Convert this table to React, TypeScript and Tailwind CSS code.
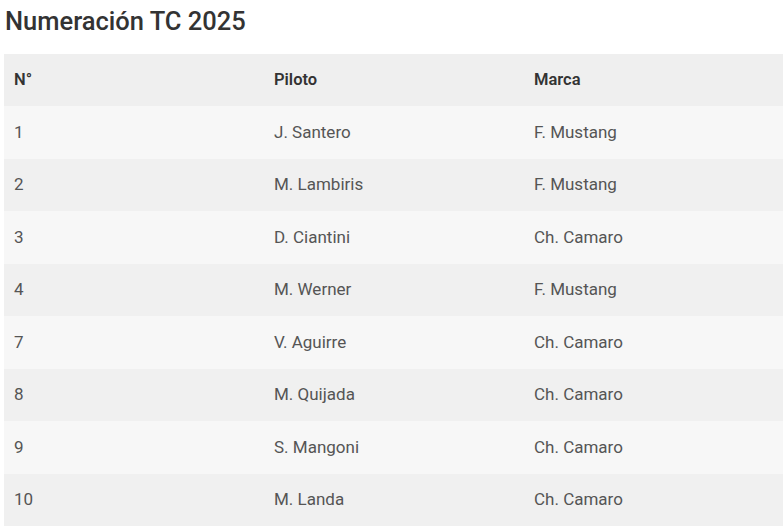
const rows = [
  { n: "1", piloto: "J. Santero", marca: "F. Mustang" },
  { n: "2", piloto: "M. Lambiris", marca: "F. Mustang" },
  { n: "3", piloto: "D. Ciantini", marca: "Ch. Camaro" },
  { n: "4", piloto: "M. Werner", marca: "F. Mustang" },
  { n: "7", piloto: "V. Aguirre", marca: "Ch. Camaro" },
  { n: "8", piloto: "M. Quijada", marca: "Ch. Camaro" },
  { n: "9", piloto: "S. Mangoni", marca: "Ch. Camaro" },
  { n: "10", piloto: "M. Landa", marca: "Ch. Camaro" },
]

export default function App() {
  return (
    <div className="bg-white min-h-screen pl-[4px] font-['Roboto',sans-serif]">
      <h1 className="pl-[1px] pt-[6px] mb-[18px] text-[25.5px] leading-[30px] font-medium text-[#333333]">
        Numeración TC 2025
      </h1>
      <table className="w-[780px] border-collapse table-fixed text-left">
        <thead>
          <tr className="h-[52px] bg-[#efefef]">
            <th className="w-[260px] pl-[10px] text-[16.5px] font-semibold text-[#333333]">N°</th>
            <th className="w-[260px] pl-[10px] text-[16.5px] font-semibold text-[#333333]">Piloto</th>
            <th className="w-[260px] pl-[10px] text-[16.5px] font-semibold text-[#333333]">Marca</th>
          </tr>
        </thead>
        <tbody>
          {rows.map((r, i) => (
            <tr key={r.n} className={`h-[52.5px] ${i % 2 === 0 ? "bg-[#f7f7f7]" : "bg-[#f0f0f0]"}`}>
              <td className="pl-[10px] text-[17px] text-[#555555]">{r.n}</td>
              <td className="pl-[10px] text-[17px] text-[#555555]">{r.piloto}</td>
              <td className="pl-[10px] text-[17px] text-[#555555]">{r.marca}</td>
            </tr>
          ))}
        </tbody>
      </table>
    </div>
  )
}
